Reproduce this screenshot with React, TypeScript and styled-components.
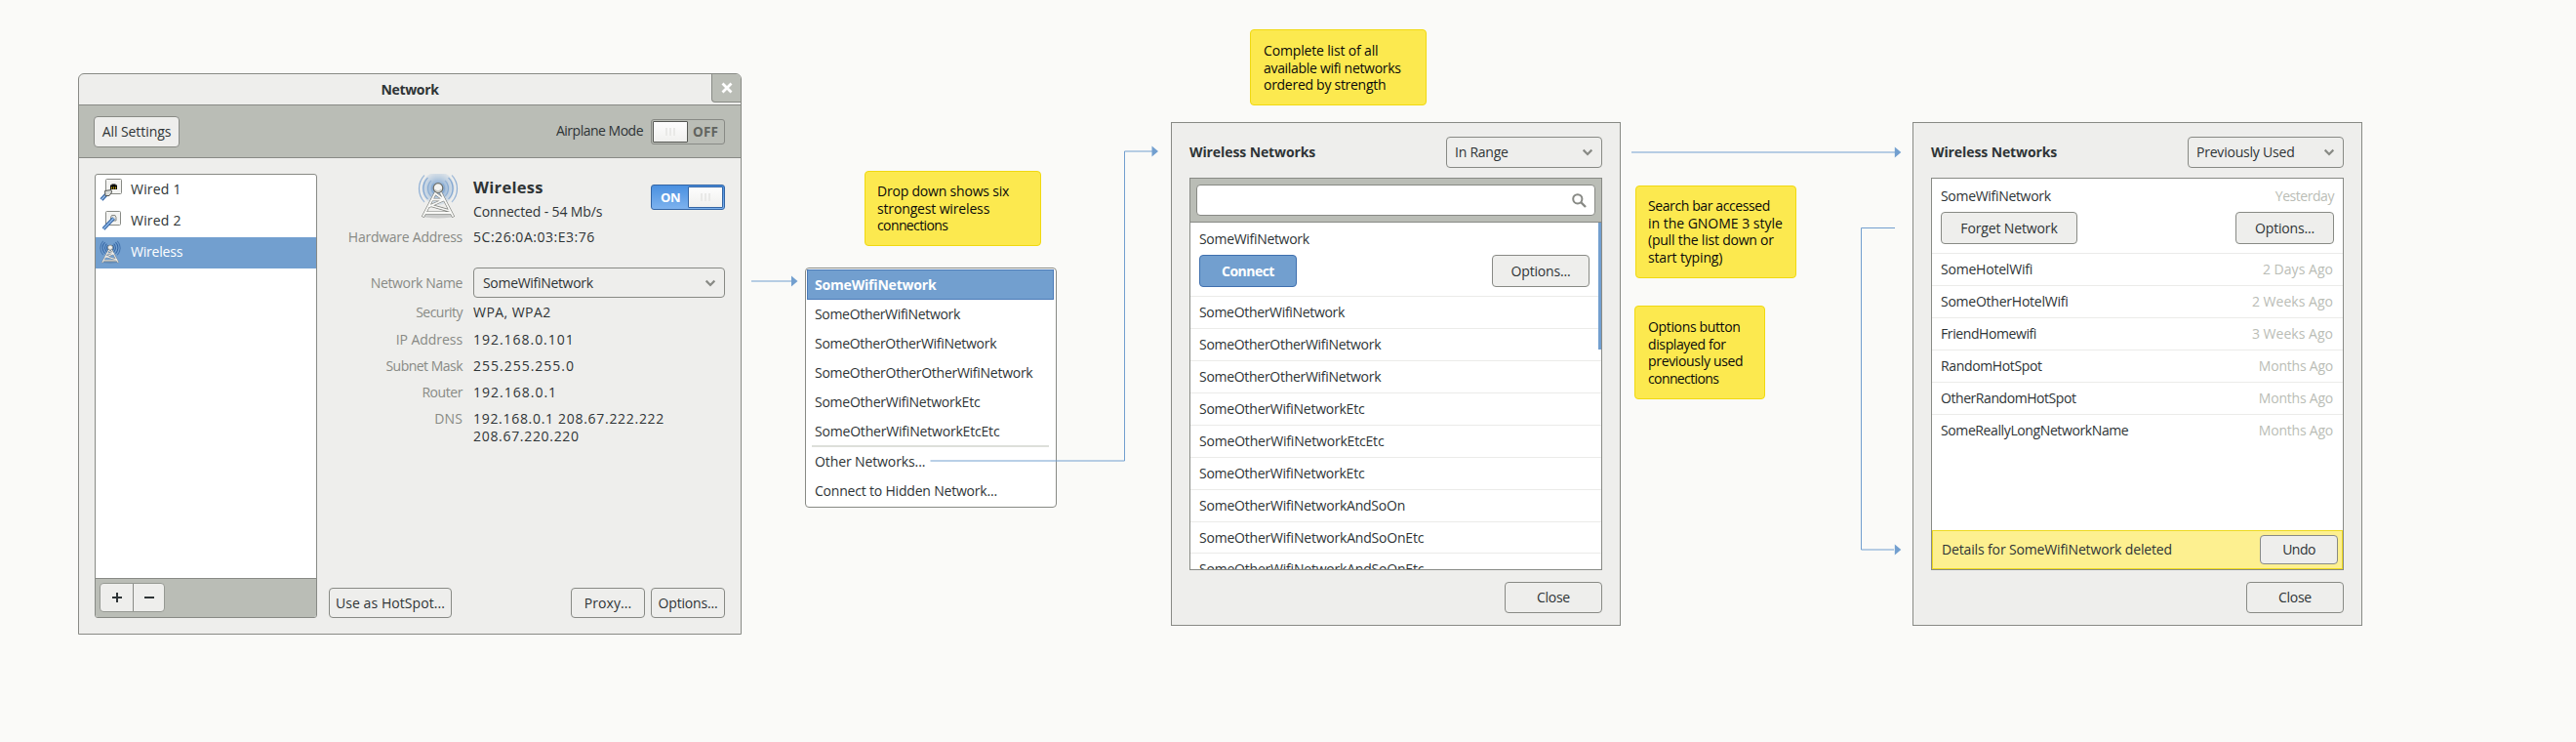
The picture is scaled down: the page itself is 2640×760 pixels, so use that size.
import React from 'react';
import styled, { createGlobalStyle, css } from 'styled-components';

const c = {
  page: '#fafaf8',
  panel: '#eeeeec',
  bar: '#babdb6',
  line: '#888a85',
  ink: '#2e3436',
  muted: '#888a85',
  faint: '#babdb6',
  blue: '#729fcf',
  blueDark: '#3f6fae',
  note: '#fce94f',
  noteLine: '#f0d911',
};

const GlobalStyle = createGlobalStyle`
  *, *::before, *::after { box-sizing: border-box; }
  body { margin: 0; background: ${c.page}; }
`;

const Board = styled.main`
  position: relative;
  width: 2640px;
  height: 760px;
  overflow: hidden;
  background: ${c.page};
  color: ${c.ink};
  font: 14px/20px 'Open Sans', 'Noto Sans', sans-serif;
  white-space: nowrap;
`;

/* Frames, notes and the popup sit freely on the board. */
const Placed = styled.section<{ $x: number; $y: number; $w: number; $h: number }>`
  position: absolute;
  left: ${p => p.$x}px;
  top: ${p => p.$y}px;
  width: ${p => p.$w}px;
  height: ${p => p.$h}px;
`;

const Text = styled.span<{ $track?: number; $bold?: boolean; $color?: string; $size?: number }>`
  letter-spacing: ${p => p.$track ?? 0}px;
  font-weight: ${p => (p.$bold ? 700 : 400)};
  ${p => p.$color && css`color: ${p.$color};`}
  ${p => p.$size && css`font-size: ${p.$size}px;`}
`;

const Button = styled.button<{ $w: number; $h?: number; $primary?: boolean }>`
  display: flex;
  align-items: center;
  justify-content: center;
  flex: none;
  width: ${p => p.$w}px;
  height: ${p => p.$h ?? 32}px;
  padding: 0;
  border: 1px solid ${p => (p.$primary ? c.blueDark : c.line)};
  border-radius: 4px;
  background: ${p => (p.$primary ? c.blue : c.panel)};
  color: ${p => (p.$primary ? '#fff' : c.ink)};
  font: inherit;
`;

const SelectBox = styled.div<{ $w: number; $h: number; $pad: number }>`
  display: flex;
  align-items: center;
  justify-content: space-between;
  width: ${p => p.$w}px;
  height: ${p => p.$h}px;
  padding: 0 9px 0 ${p => p.$pad}px;
  border: 1px solid ${c.line};
  border-radius: 4px;
`;

const Chevron = () => (
  <svg width="10" height="8" viewBox="0 0 10 8" fill="none">
    <path d="M0.7 1.6 5 5.9 9.3 1.6" stroke={c.line} strokeWidth="2.1" />
  </svg>
);

/* ---------- Network settings window ---------- */

const SettingsWindow = styled(Placed)`
  display: flex;
  flex-direction: column;
  border: 1px solid ${c.line};
  border-radius: 6px 6px 0 0;
  background: ${c.panel};
`;

const TitleBar = styled.header`
  display: grid;
  grid-template-columns: 30px 1fr 30px;
  height: 32px;
  border-bottom: 1px solid ${c.line};
  text-align: center;
  line-height: 31px;
`;

const CloseTab = styled.div`
  grid-column: 3;
  display: flex;
  align-items: center;
  justify-content: center;
  height: 29px;
  border: solid ${c.line};
  border-width: 0 0 1px 1px;
  border-radius: 0 5px 0 4px;
  background: ${c.bar};
`;

const Toolbar = styled.div`
  display: flex;
  align-items: center;
  height: 54px;
  padding: 0 16px 0 15px;
  border-bottom: 1px solid ${c.line};
  background: ${c.bar};
`;

const ToolbarLabel = styled.div`
  margin: -2px 8px 0 auto;
`;

const Switch = styled.div<{ $on?: boolean }>`
  display: flex;
  flex-direction: ${p => (p.$on ? 'row-reverse' : 'row')};
  align-items: center;
  width: 76px;
  height: 26px;
  padding: 1px;
  border: 1px solid ${p => (p.$on ? '#3465a4' : c.line)};
  border-radius: 3px;
  background: ${p => (p.$on ? 'linear-gradient(#4a90e0, #7db2ee)' : 'transparent')};
  color: ${p => (p.$on ? '#fff' : '#61645f')};
`;

const Knob = styled.div<{ $on?: boolean }>`
  display: flex;
  align-items: center;
  justify-content: center;
  gap: 2px;
  width: 36px;
  height: 22px;
  border: 1px solid ${p => (p.$on ? '#3465a4' : '#555753')};
  border-radius: 1px;
  background: linear-gradient(#fdfdfd, #f0f0ee);
`;

const Grip = styled.i`
  width: 2px;
  height: 8px;
  background: #e9e9e7;
`;

const SwitchText = styled.div`
  flex: 1;
  text-align: center;
`;

const ToggleSwitch = ({ on }: { on?: boolean }) => (
  <Switch $on={on}>
    <Knob $on={on}><Grip /><Grip /><Grip /></Knob>
    <SwitchText>
      <Text $bold $size={on ? 13 : 13.5} $track={on ? -0.5 : 0.1}>{on ? 'ON' : 'OFF'}</Text>
    </SwitchText>
  </Switch>
);

const Body = styled.div`
  display: flex;
  flex: 1;
  padding: 16px;
`;

const Sidebar = styled.aside`
  display: flex;
  flex-direction: column;
  flex: none;
  width: 228px;
  border: 1px solid ${c.line};
  border-radius: 3px;
  background: #fff;
  overflow: hidden;
`;

const Device = styled.div<{ $active?: boolean }>`
  display: grid;
  grid-template-columns: 24px 1fr;
  align-items: center;
  gap: 8px;
  height: 32px;
  padding: 0 0 2px 4px;
  background: ${p => (p.$active ? c.blue : 'transparent')};
  color: ${p => (p.$active ? '#fff' : c.ink)};
`;

const SidebarFooter = styled.div`
  display: flex;
  height: 40px;
  margin-top: auto;
  padding: 4px;
  border-top: 1px solid ${c.line};
  background: ${c.bar};
`;

const AddRemove = styled.div`
  display: grid;
  grid-template-columns: 33px 1fr;
  width: 67px;
  height: 30px;
  border: 1px solid #969993;
  border-radius: 4px;
  background: ${c.panel};
`;

const AddRemoveCell = styled.div`
  display: flex;
  align-items: center;
  justify-content: center;
  & + & { border-left: 1px solid ${c.line}; }
`;

const Details = styled.div`
  display: flex;
  flex-direction: column;
  flex: 1;
  padding-left: 12px;
`;

const Summary = styled.div`
  display: grid;
  grid-template-columns: 136px 1fr 76px;
  column-gap: 12px;
  height: 50px;
`;

const TowerSlot = styled.div`
  display: flex;
  justify-content: flex-end;
  padding-right: 3px;
`;

const SummaryText = styled.div`
  display: flex;
  flex-direction: column;
  padding-top: 4px;
`;

const SwitchSlot = styled.div`
  padding-top: 11px;
`;

const FieldStack = styled.div`
  display: flex;
  flex-direction: column;
  margin-top: -21px;
`;

const Field = styled.div<{ $h: number; $gap?: number }>`
  display: grid;
  grid-template-columns: 137px 1fr;
  column-gap: 11px;
  height: ${p => p.$h}px;
  margin-top: ${p => p.$gap ?? 0}px;
  line-height: ${p => p.$h}px;
`;

const FieldLabel = styled.div`
  color: ${c.muted};
  text-align: right;
`;

const FieldLines = styled.div`
  display: flex;
  flex-direction: column;
`;

const Actions = styled.div`
  display: flex;
  gap: 6px;
  margin-top: auto;
  & > :first-child { margin-right: auto; }
`;

const Tower = ({ size }: { size: 'small' | 'large' }) => {
  const large = size === 'large';
  const frame = 'M18.5 19 6 43M23.5 19 36 43M15 26.5H27M12 32 33 38M8 40H34M12.5 33 26 27M18 20 26 26';
  return (
    <svg width={large ? 42 : 22} height={large ? 46 : 24} viewBox="0 0 42 46" fill="none">
      <defs>
        <radialGradient id={`glow-${size}`} cx="21" cy="15" r="20" gradientUnits="userSpaceOnUse">
          <stop offset="0" stopColor="#3f7cc4" stopOpacity=".8" />
          <stop offset=".6" stopColor="#729fcf" stopOpacity=".35" />
          <stop offset="1" stopColor="#729fcf" stopOpacity="0" />
        </radialGradient>
        <linearGradient id={`wave-${size}`} x1="0" y1="0" x2="42" y2="0" gradientUnits="userSpaceOnUse">
          <stop offset="0" stopColor="#5f8fc8" />
          <stop offset=".35" stopColor="#5f8fc8" stopOpacity=".35" />
          <stop offset=".65" stopColor="#5f8fc8" stopOpacity=".35" />
          <stop offset="1" stopColor="#5f8fc8" />
        </linearGradient>
      </defs>
      {large && <circle cx="21" cy="15" r="17" fill={`url(#glow-${size})`} />}
      <g stroke={large ? `url(#wave-${size})` : '#3465a4'} strokeWidth={large ? 1.3 : 2}>
        <path d="M7 29A20 20 0 0 1 7 1.5M35 29A20 20 0 0 0 35 1.5" opacity=".7" />
        <path d="M10.5 26A15.5 15.5 0 0 1 10.5 4M31.5 26A15.5 15.5 0 0 0 31.5 4" />
        <path d="M14 23A11 11 0 0 1 14 7M28 23A11 11 0 0 0 28 7" />
        <path d="M16.5 20A7 7 0 0 1 16.5 10M25.5 20A7 7 0 0 0 25.5 10" />
      </g>
      <ellipse cx="21" cy="43" rx="16" ry="2.5" fill="#2e3436" opacity=".18" />
      <g strokeLinejoin="round" strokeLinecap="square">
        <path d={frame} stroke="#7d7f7a" strokeWidth="3" />
        <path d={frame} stroke="#f8f8f6" strokeWidth="1.8" />
      </g>
      <circle cx="21" cy="14.5" r="4.8" fill="#f3f3f1" stroke="#6e706b" strokeWidth="1.3" />
      <path d="M18 16.5A4 4 0 0 0 24.5 16" stroke="#c8cac5" strokeWidth="1.5" />
    </svg>
  );
};

const WiredPlugged = () => (
  <svg width="24" height="24" viewBox="0 0 24 24" fill="none">
    <rect x="6.5" y="1.5" width="16" height="15" rx="1" fill="#f4f4f2" stroke="#888a85" />
    <path d="M11 12V7.500h1.500V6.500h4v1H18V12z" fill="#0b0b0b" />
    <path d="M12.500 11.500V9.500M14.500 11.500V9.500M16.500 11.500V9.500" stroke="#c9a800" />
    <path d="M2 22.500 8 16" stroke="#3465a4" strokeWidth="4" />
    <path d="M2 22.500 8 16" stroke="#9dc0ea" strokeWidth="1.4" />
    <path d="M5.500 13.500 12 12.500 12.500 15 10 18.500H6z" fill="#dcdedb" stroke="#555753" />
  </svg>
);

const WiredSocket = () => (
  <svg width="24" height="24" viewBox="0 0 24 24" fill="none">
    <rect x="6.500" y="2.500" width="15" height="14" rx="1" fill="#f4f4f2" stroke="#888a85" />
    <path d="M11.500 12V8.500L12.500 6.500H16L17 8.500V12z" fill="#e3e4e1" stroke="#888a85" />
    <path d="M4 20.500 14.500 9.500" stroke="#3465a4" strokeWidth="3.8" />
    <path d="M4 20.500 14.500 9.500" stroke="#8fb8e8" strokeWidth="1.6" />
  </svg>
);

const FieldRow = ({ label, lt, value, vt, h, gap }: {
  label?: string; lt?: number; value: string; vt: number; h: number; gap?: number;
}) => (
  <Field $h={h} $gap={gap}>
    <FieldLabel>{label && <Text $track={lt}>{label}</Text>}</FieldLabel>
    <Text $track={vt}>{value}</Text>
  </Field>
);

const ConnectionFields = () => (
  <FieldStack>
    <FieldRow value="Connected - 54 Mb/s" vt={-0.13} h={20} />
    <FieldRow label="Hardware Address" lt={-0.25} value="5C:26:0A:03:E3:76" vt={0.53} h={20} gap={6} />
    <Field $h={31} $gap={21}>
      <FieldLabel><Text $track={-0.36}>Network Name</Text></FieldLabel>
      <SelectBox $w={258} $h={31} $pad={9}><Text $track={-0.31}>SomeWifiNetwork</Text><Chevron /></SelectBox>
    </Field>
    <FieldRow label="Security" lt={-0.54} value="WPA, WPA2" vt={0.45} h={20} gap={5} />
    <FieldRow label="IP Address" lt={-0.06} value="192.168.0.101" vt={0.97} h={20} gap={8} />
    <FieldRow label="Subnet Mask" lt={-0.52} value="255.255.255.0" vt={0.99} h={20} gap={7} />
    <FieldRow label="Router" lt={-0.44} value="192.168.0.1" vt={1} h={20} gap={7} />
    <Field $h={18} $gap={8}>
      <FieldLabel><Text $track={0.1}>DNS</Text></FieldLabel>
      <FieldLines>
        <Text $track={0.7}>192.168.0.1 208.67.222.222</Text>
        <Text $track={0.69}>208.67.220.220</Text>
      </FieldLines>
    </Field>
  </FieldStack>
);

const NetworkSettings = () => (
  <SettingsWindow $x={80} $y={75} $w={680} $h={575}>
    <TitleBar>
      <span />
      <Text $bold $track={-0.34}>Network</Text>
      <CloseTab>
        <svg width="12" height="12" viewBox="0 0 12 12">
          <path d="M1.5 1.5 10.5 10.5M10.5 1.5 1.5 10.5" stroke="#fff" strokeWidth="2.800" />
        </svg>
      </CloseTab>
    </TitleBar>
    <Toolbar>
      <Button $w={88}><Text $track={-0.07}>All Settings</Text></Button>
      <ToolbarLabel><Text $track={-0.5}>Airplane Mode</Text></ToolbarLabel>
      <ToggleSwitch />
    </Toolbar>
    <Body>
      <Sidebar>
        <Device><WiredPlugged /><Text $track={0.2}>Wired 1</Text></Device>
        <Device><WiredSocket /><Text $track={0.2}>Wired 2</Text></Device>
        <Device $active><Tower size="small" /><Text $track={-0.2}>Wireless</Text></Device>
        <SidebarFooter>
          <AddRemove>
            <AddRemoveCell>
              <svg width="10" height="10"><path d="M5 0V10M0 5H10" stroke={c.ink} strokeWidth="2" /></svg>
            </AddRemoveCell>
            <AddRemoveCell>
              <svg width="10" height="10"><path d="M0 5H10" stroke={c.ink} strokeWidth="2" /></svg>
            </AddRemoveCell>
          </AddRemove>
        </SidebarFooter>
      </Sidebar>
      <Details>
        <Summary>
          <TowerSlot><Tower size="large" /></TowerSlot>
          <SummaryText>
            <Text $bold $size={16.5} $track={0.3}>Wireless</Text>
          </SummaryText>
          <SwitchSlot><ToggleSwitch on /></SwitchSlot>
        </Summary>
        <ConnectionFields />
        <Actions>
          <Button $w={126} $h={31}><Text $track={0.07}>Use as HotSpot...</Text></Button>
          <Button $w={76} $h={31}><Text $track={0.09}>Proxy...</Text></Button>
          <Button $w={76} $h={31}><Text $track={-0.19}>Options...</Text></Button>
        </Actions>
      </Details>
    </Body>
  </SettingsWindow>
);

/* ---------- Network drop-down ---------- */

const Popup = styled(Placed)`
  display: flex;
  flex-direction: column;
  padding: 1px 2px 0 1px;
  border: 1px solid ${c.line};
  border-radius: 4px;
  background: #fff;
`;

const PopupItem = styled.div<{ $selected?: boolean }>`
  flex: none;
  height: 30px;
  padding-left: 8px;
  line-height: 29px;
  ${p => p.$selected && css`
    height: 31px;
    padding-left: 7px;
    border: 1px solid #4a7ab8;
    background: ${c.blue};
    color: #fff;
  `}
`;

const PopupRule = styled.hr`
  flex: none;
  height: 2px;
  margin: -1px 5px 0;
  border: 0;
  background: #dddfda;
`;

const popupNetworks: [string, number][] = [
  ['SomeOtherWifiNetwork', -0.32],
  ['SomeOtherOtherWifiNetwork', -0.29],
  ['SomeOtherOtherOtherWifiNetwork', -0.27],
  ['SomeOtherWifiNetworkEtc', -0.24],
  ['SomeOtherWifiNetworkEtcEtc', -0.19],
];

const NetworkPopup = () => (
  <Popup $x={825} $y={274} $w={258} $h={246}>
    <PopupItem $selected><Text $bold $track={-0.19}>SomeWifiNetwork</Text></PopupItem>
    {popupNetworks.map(([name, t]) => (
      <PopupItem key={name}><Text $track={t}>{name}</Text></PopupItem>
    ))}
    <PopupRule />
    <PopupItem><Text $track={-0.11}>Other Networks...</Text></PopupItem>
    <PopupItem><Text $track={-0.2}>Connect to Hidden Network...</Text></PopupItem>
  </Popup>
);

/* ---------- Wireless network dialogs ---------- */

const Dialog = styled(Placed)`
  display: flex;
  flex-direction: column;
  padding: 14px 18px 12px;
  border: 1px solid ${c.line};
  background: ${c.panel};
`;

const DialogHeader = styled.header`
  display: flex;
  align-items: center;
  justify-content: space-between;
  height: 32px;
  margin-bottom: 10px;
`;

const ListFrame = styled.div`
  display: flex;
  flex-direction: column;
  height: 402px;
  border: 1px solid ${c.line};
  background: #fff;
  overflow: hidden;
`;

const SearchBar = styled.div`
  flex: none;
  height: 45px;
  padding: 6px;
  border-bottom: 1px solid ${c.line};
  background: ${c.bar};
`;

const SearchField = styled.div`
  display: flex;
  align-items: center;
  justify-content: flex-end;
  height: 32px;
  padding-right: 8px;
  border: 1px solid ${c.line};
  border-radius: 4px;
  background: #fff;
`;

const Scroller = styled.div`
  position: relative;
  flex: 1;
  min-height: 0;
  overflow: hidden;
`;

const ScrollThumb = styled.div`
  position: absolute;
  top: 0;
  right: 0;
  width: 3px;
  height: 130px;
  background: ${c.blue};
`;

const NetworkRow = styled.div<{ $h?: number; $rule?: boolean }>`
  display: flex;
  justify-content: space-between;
  height: ${p => p.$h ?? 33}px;
  padding: 0 10px 0 9px;
  border-bottom: 1px solid ${p => (p.$rule === false ? 'transparent' : '#ebebe9')};
  line-height: 31px;
`;

const ExpandedRow = styled.div<{ $pad: number; $right: number }>`
  display: flex;
  flex-direction: column;
  justify-content: space-between;
  padding: ${p => p.$pad}px ${p => p.$right}px 9px 9px;
  height: ${p => 71 + p.$pad}px;
  border-bottom: 1px solid #ebebe9;
`;

const RowName = styled(Text)`
  display: block;
  height: 22px;
  line-height: 23px;
`;

const Spread = styled.div`
  display: flex;
  justify-content: space-between;
`;

const DialogFooter = styled.footer`
  display: flex;
  justify-content: flex-end;
  margin-top: 12px;
`;

const InfoBar = styled.div`
  display: flex;
  align-items: center;
  justify-content: space-between;
  height: 40px;
  padding: 0 4px 0 9px;
  border: 1px solid #edd920;
  background: #fdf090;
`;

const inRange: [string, number][] = [
  ['SomeOtherWifiNetwork', -0.32],
  ['SomeOtherOtherWifiNetwork', -0.29],
  ['SomeOtherOtherWifiNetwork', -0.29],
  ['SomeOtherWifiNetworkEtc', -0.24],
  ['SomeOtherWifiNetworkEtcEtc', -0.19],
  ['SomeOtherWifiNetworkEtc', -0.24],
  ['SomeOtherWifiNetworkAndSoOn', -0.22],
  ['SomeOtherWifiNetworkAndSoOnEtc', -0.21],
  ['SomeOtherWifiNetworkAndSoOnEtc', -0.21],
];

const InRangeDialog = () => (
  <Dialog $x={1200} $y={125} $w={461} $h={516}>
    <DialogHeader>
      <Text $bold $track={-0.1}>Wireless Networks</Text>
      <SelectBox $w={160} $h={32} $pad={8}><Text $track={-0.25}>In Range</Text><Chevron /></SelectBox>
    </DialogHeader>
    <ListFrame>
      <SearchBar>
        <SearchField>
          <svg width="15" height="15" viewBox="0 0 15 15" fill="none" stroke={c.line}>
            <circle cx="5.8" cy="5.8" r="4.6" strokeWidth="2" />
            <path d="M9 9 14 14" strokeWidth="2.400" />
          </svg>
        </SearchField>
      </SearchBar>
      <Scroller>
        <ExpandedRow $pad={5} $right={12}>
          <RowName $track={-0.31}>SomeWifiNetwork</RowName>
          <Spread>
            <Button $w={100} $h={33} $primary><Text $bold $track={-0.53}>Connect</Text></Button>
            <Button $w={100} $h={33}><Text $track={-0.19}>Options...</Text></Button>
          </Spread>
        </ExpandedRow>
        {inRange.map(([name, t], i) => (
          <NetworkRow key={i} $h={i === 7 ? 32 : 33}><Text $track={t}>{name}</Text></NetworkRow>
        ))}
        <ScrollThumb />
      </Scroller>
    </ListFrame>
    <DialogFooter><Button $w={100}><Text $track={-0.29}>Close</Text></Button></DialogFooter>
  </Dialog>
);

const previous: [string, number, string, number][] = [
  ['SomeHotelWifi', -0.21, '2 Days Ago', 0.03],
  ['SomeOtherHotelWifi', -0.24, '2 Weeks Ago', 0.02],
  ['FriendHomewifi', -0.41, '3 Weeks Ago', 0.02],
  ['RandomHotSpot', -0.36, 'Months Ago', -0.22],
  ['OtherRandomHotSpot', -0.44, 'Months Ago', -0.22],
  ['SomeReallyLongNetworkName', -0.39, 'Months Ago', -0.22],
];

const PreviousDialog = () => (
  <Dialog $x={1960} $y={125} $w={461} $h={516}>
    <DialogHeader>
      <Text $bold $track={-0.1}>Wireless Networks</Text>
      <SelectBox $w={160} $h={32} $pad={8}><Text $track={-0.21}>Previously Used</Text><Chevron /></SelectBox>
    </DialogHeader>
    <ListFrame>
      <Scroller>
        <ExpandedRow $pad={6} $right={9}>
          <Spread>
            <RowName $track={-0.31}>SomeWifiNetwork</RowName>
            <RowName $track={-0.46} $color={c.faint}>Yesterday</RowName>
          </Spread>
          <Spread>
            <Button $w={140} $h={33}><Text $track={-0.13}>Forget Network</Text></Button>
            <Button $w={101} $h={33}><Text $track={-0.19}>Options...</Text></Button>
          </Spread>
        </ExpandedRow>
        {previous.map(([name, t, when, wt], i) => (
          <NetworkRow key={name} $rule={i < previous.length - 1}>
            <Text $track={t}>{name}</Text>
            <Text $track={wt} $color={c.faint}>{when}</Text>
          </NetworkRow>
        ))}
      </Scroller>
      <InfoBar>
        <Text $track={-0.14}>Details for SomeWifiNetwork deleted</Text>
        <Button $w={80} $h={30}><Text $track={-0.55}>Undo</Text></Button>
      </InfoBar>
    </ListFrame>
    <DialogFooter><Button $w={100}><Text $track={-0.29}>Close</Text></Button></DialogFooter>
  </Dialog>
);

/* ---------- Annotations ---------- */

const NoteCard = styled(Placed)<{ $top: number; $left: number }>`
  display: flex;
  flex-direction: column;
  padding: ${p => p.$top}px 0 0 ${p => p.$left}px;
  border: 1px solid ${c.noteLine};
  border-radius: 4px;
  background: ${c.note};
  color: #0a0a0a;
  line-height: 17.5px;
`;

type NoteData = { x: number; y: number; w: number; h: number; top: number; left: number; lines: [string, number][] };

const notes: NoteData[] = [
  { x: 886, y: 175, w: 181, h: 77, top: 11, left: 12, lines: [['Drop down shows six', -0.2], ['strongest wireless', -0.15], ['connections', -0.61]] },
  { x: 1281, y: 30, w: 181, h: 78, top: 12, left: 13, lines: [['Complete list of all', -0.16], ['available wifi networks', -0.31], ['ordered by strength', -0.28]] },
  { x: 1676, y: 190, w: 165, h: 95, top: 11, left: 12, lines: [['Search bar accessed', -0.4], ['in the GNOME 3 style', -0.02], ['(pull the list down or', -0.22], ['start typing)', -0.15]] },
  { x: 1675, y: 313, w: 134, h: 96, top: 12, left: 13, lines: [['Options button', -0.35], ['displayed for', -0.38], ['previously used', -0.33], ['connections', -0.61]] },
];

const ConnectorLayer = styled.svg`
  position: absolute;
  inset: 0;
  pointer-events: none;
`;

const connectors = ['M770 288H811', 'M953.5 472H1152.5V155H1181', 'M1672 156H1942', 'M1942 233.5H1907.5V563H1941'];
const heads: [number, number][] = [[811, 288], [1180.5, 155], [1941.8, 156], [1941.8, 563]];

const Connectors = () => (
  <ConnectorLayer width="2640" height="760" viewBox="0 0 2640 760" fill="none">
    {connectors.map(d => <path key={d} d={d} stroke={c.blue} />)}
    {heads.map(([x, y]) => <path key={`${x}-${y}`} d={`M${x} ${y - 5.5}L${x + 6.5} ${y}L${x} ${y + 5.5}Z`} fill={c.blue} />)}
  </ConnectorLayer>
);

export default function App() {
  return (
    <Board>
      <GlobalStyle />
      <NetworkSettings />
      <NetworkPopup />
      <InRangeDialog />
      <PreviousDialog />
      {notes.map((n, i) => (
        <NoteCard key={i} $x={n.x} $y={n.y} $w={n.w} $h={n.h} $top={n.top} $left={n.left}>
          {n.lines.map(([line, t]) => <Text key={line} $track={t}>{line}</Text>)}
        </NoteCard>
      ))}
      <Connectors />
    </Board>
  );
}
